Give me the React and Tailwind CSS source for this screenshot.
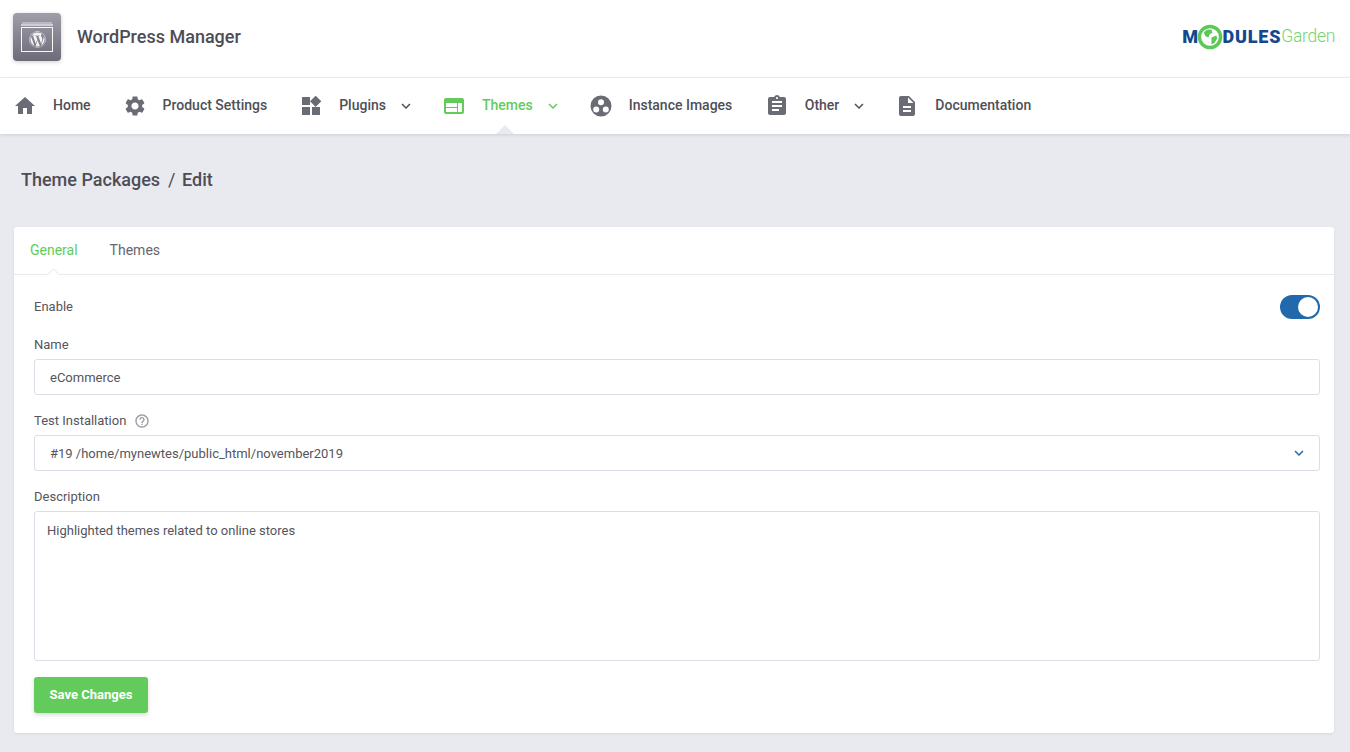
import React from "react";
import { MdHome, MdSettings, MdWidgets, MdWeb, MdAssignment, MdDescription, MdKeyboardArrowDown, MdHelpOutline } from "react-icons/md";
import { FaWordpress } from "react-icons/fa";

function InstanceIcon({ className }) {
  return (
    <svg viewBox="0 0 24 24" className={className} fill="currentColor">
      <path
        fillRule="evenodd"
        d="M12 1.5a10.5 10.5 0 1 0 0 21 10.5 10.5 0 0 0 0-21zM12 5.2a3 3 0 1 1 0 6 3 3 0 0 1 0-6zM7.2 12.6a3 3 0 1 1 0 6 3 3 0 0 1 0-6zM16.8 12.6a3 3 0 1 1 0 6 3 3 0 0 1 0-6z"
      />
    </svg>
  );
}

const items = [
  { label: "Home", Icon: MdHome },
  { label: "Product Settings", Icon: MdSettings },
  { label: "Plugins", Icon: MdWidgets, caret: true },
  { label: "Themes", Icon: MdWeb, caret: true, active: true },
  { label: "Instance Images", Icon: InstanceIcon },
  { label: "Other", Icon: MdAssignment, caret: true, nudge: true },
  { label: "Documentation", Icon: MdDescription },
];

function NavItem({ label, Icon, caret, active, nudge }) {
  return (
    <div className={`relative flex h-[56px] items-center ${nudge ? "ml-[0.5px]" : ""} ${active ? "text-[#62cb5c]" : "text-[#4f4f57]"}`}>
      <Icon className={`h-6 w-6 ${active ? "text-[#62cb5c]" : "text-[#6a6c75]"}`} />
      <span className="ml-4 pb-[2px] text-[14px] font-medium">{label}</span>
      {caret && <MdKeyboardArrowDown className="ml-[11px] -mr-[5px] h-[18px] w-[18px]" />}
      {active && (
        <span className="absolute bottom-0 left-[54px] h-0 w-0 border-x-[9px] border-b-[9px] border-x-transparent border-b-[#e9eaef]" />
      )}
    </div>
  );
}

function Logo() {
  return (
    <div className="flex items-center leading-none">
      <span className="text-[18px] font-black tracking-[-0.5px] text-[#13488f]">M</span>
      <svg width="26" height="26" viewBox="0 0 27 27" className="mx-[-0.5px]">
        <circle cx="13.5" cy="13.5" r="11" fill="#fff" stroke="#5fc75a" strokeWidth="3.6" />
        <path d="M7 9c2-3 5-4 8-3l1 3-3 2-1 3-3-1zM15 14l5-2 1 3-3 5-3 1z" fill="#5fc75a" />
      </svg>
      <span className="text-[18px] font-black tracking-[0.8px] text-[#13488f]">DULES</span>
      <span className="text-[17.5px] font-light tracking-[-0.3px] text-[#78d073]">Garden</span>
    </div>
  );
}

function Label({ children }) {
  return <div className="text-[13px] leading-[20px] text-[#55555d]">{children}</div>;
}

export default function App() {
  return (
    <div className="min-h-screen bg-[#e9eaef] font-['Roboto',sans-serif] text-[#4d4d55]">
      <header className="flex h-[78px] items-center justify-between border-b border-[#f0f0f3] bg-white pb-[3px] pl-[13px] pr-[15px]">
        <div className="flex items-center">
          <div className="relative flex h-12 w-12 items-center justify-center rounded-[4px] bg-gradient-to-b from-[#a09ea9] to-[#6d6b77] shadow-[0_1px_4px_rgba(0,0,0,0.2)]">
            <div className="absolute left-[9px] right-[9px] top-[9px] h-[2px] bg-white/35" />
            <div className="absolute left-[8px] right-[8px] top-[11px] h-[2px] bg-white/55" />
            <div className="mt-[5px] flex h-[25px] w-[32px] items-center justify-center border border-white/95">
              <FaWordpress className="h-[17px] w-[17px] text-white/90" />
            </div>
          </div>
          <div className="ml-4 pb-[2px] text-[18px] font-medium text-[#4d4d55]">WordPress Manager</div>
        </div>
        <Logo />
      </header>

      <nav className="flex h-[56px] items-center gap-8 bg-white pl-[13px] shadow-[0_1px_4px_rgba(0,0,0,0.12)]">
        {items.map((it) => (
          <NavItem key={it.label} {...it} />
        ))}
      </nav>

      <div className="pb-[19px] pl-[14px] pr-[16px]">
        <div className="flex h-[93px] items-center pb-[2px] pl-[7px] text-[18px] font-medium text-[#4d4d55]">
          <span>Theme Packages</span>
          <span className="ml-[8px] mr-[6.5px] font-normal">/</span>
          <span>Edit</span>
        </div>

        <div className="rounded-[3px] bg-white shadow-[0_1px_3px_rgba(0,0,0,0.08)]">
          <div className="relative flex h-[48px] items-center gap-8 border-b border-[#e9eaef] px-4 text-[14px]">
            <span className="text-[#62cb5c]">General</span>
            <span className="text-[#66666e]">Themes</span>
            <span className="absolute bottom-[-5px] left-[35px] h-[9px] w-[9px] rotate-45 border-l border-t border-[#e9eaef] bg-white" />
          </div>

          <div className="flex flex-col pb-[20px] pl-5 pr-[14px] pt-[20px]">
            <div className="flex h-[24px] items-center justify-between">
              <Label>Enable</Label>
              <div className="flex h-[24px] w-[40px] items-center justify-end rounded-full bg-[#2268ad] p-[2px]">
                <div className="h-5 w-5 rounded-full bg-white" />
              </div>
            </div>

            <div className="mt-[16px]"><Label>Name</Label></div>
            <div className="mt-[4px] flex h-[36px] items-center rounded-[3px] border border-[#dcdde6] px-[15px] pt-[2px] text-[13px] text-[#55555d]">
              eCommerce
            </div>

            <div className="mt-[16px] flex items-center">
              <Label>Test Installation</Label>
              <MdHelpOutline className="ml-[8px] h-[16px] w-[16px] text-[#9a9aa2]" />
            </div>
            <div className="mt-[4px] flex h-[36px] items-center justify-between rounded-[3px] border border-[#dcdde6] pl-[15px] pr-[11px] text-[13px] text-[#55555d]">
              <span className="pt-[2px]">#19 /home/mynewtes/public_html/november2019</span>
              <MdKeyboardArrowDown className="h-[18px] w-[18px] text-[#2268ad]" />
            </div>

            <div className="mt-[16px]"><Label>Description</Label></div>
            <div className="mt-[4px] h-[150px] rounded-[3px] border border-[#dcdde6] px-[12px] py-[9px] text-[13px] leading-[20px] text-[#55555d]">
              Highlighted themes related to online stores
            </div>

            <div className="mt-[16px]">
              <button className="h-[36px] w-[114px] rounded-[3px] bg-[#62cb5c] text-[13px] font-bold text-white shadow-[0_2px_4px_rgba(0,0,0,0.15)]">
                Save Changes
              </button>
            </div>
          </div>
        </div>
      </div>
    </div>
  );
}
